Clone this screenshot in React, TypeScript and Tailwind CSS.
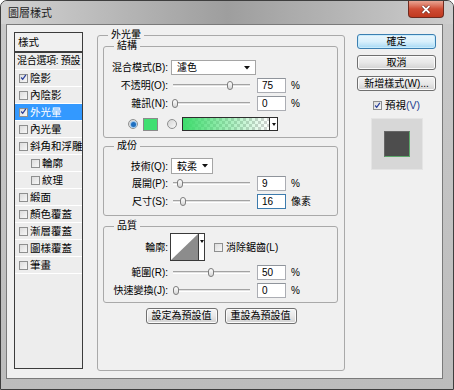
import React from "react";

function Check({ on = false }: { on?: boolean }) {
  return (
    <div className="w-[9px] h-[9px] shrink-0 border border-[#8e8f8f] bg-gradient-to-br from-[#dcdcdc] to-[#f7f7f7] flex items-center justify-center">
      {on && (
        <svg width="9" height="9" viewBox="0 0 9 9" className="-mt-[1px]">
          <path d="M1.5 4.5 L3.5 6.8 L7.5 1.2" fill="none" stroke="#253c9a" strokeWidth="1.6" />
        </svg>
      )}
    </div>
  );
}

function Radio({ on = false }: { on?: boolean }) {
  return (
    <div className="w-[10px] h-[10px] shrink-0 rounded-full border border-[#8e8f8f] bg-gradient-to-br from-[#d4d4d4] to-[#f8f8f8] flex items-center justify-center">
      {on && <div className="w-[5px] h-[5px] rounded-full bg-[#1f6fc0] ring-1 ring-[#9cc6ec]" />}
    </div>
  );
}

function Arrow() {
  return (
    <svg width="6" height="4" viewBox="0 0 6 4">
      <path d="M0 0 H6 L3 3.5 Z" fill="#111" />
    </svg>
  );
}

function Slider({ pos }: { pos: number }) {
  return (
    <div className="relative w-[77px] h-[11px] ml-[5px] flex items-center">
      <div className="w-full h-[3px] border-t border-[#a3a3a3] border-b border-b-white bg-[#e2e2e2]" />
      <div
        className="absolute top-[1px] w-[6px] h-[9px] rounded-[3px] border border-[#7d7d7d] bg-gradient-to-b from-white to-[#d6d6d6]"
        style={{ left: pos }}
      />
    </div>
  );
}

function Field({ value, focus = false }: { value: string; focus?: boolean }) {
  return (
    <div
      className={
        focus
          ? "w-[29px] h-[15px] ml-[7px] border border-[#3d7bad] bg-white pl-[4px] text-[10px] leading-[13px]"
          : "w-[29px] h-[15px] ml-[7px] border border-[#abadb3] border-t-[#8f949b] bg-white pl-[4px] text-[10px] leading-[13px]"
      }
    >
      {value}
    </div>
  );
}

function Label({ text }: { text: string }) {
  return <div className="w-[64px] shrink-0 text-right text-[10px] leading-[13px] whitespace-nowrap">{text}</div>;
}

function SliderRow({ label, pos, value, unit, focus, className }: { label: string; pos: number; value: string; unit: string; focus?: boolean; className: string }) {
  return (
    <div className={"flex items-center h-[15px] " + className}>
      <Label text={label} />
      <Slider pos={pos} />
      <Field value={value} focus={focus} />
      <div className="ml-[5px] text-[10px] leading-[13px]">{unit}</div>
    </div>
  );
}

function Group({ title, className, children }: { title: string; className: string; children: React.ReactNode }) {
  return (
    <div className={"relative border border-[#a9a9a9] rounded-[3px] " + className}>
      <div className="absolute -top-[8px] left-[10px] px-[3px] bg-[#f0f0f0] text-[10px] leading-[14px]">{title}</div>
      {children}
    </div>
  );
}

function WinButton({ text, primary = false, className = "" }: { text: string; primary?: boolean; className?: string }) {
  return (
    <div
      className={
        (primary
          ? "border-[#3c7fb1] bg-gradient-to-b from-[#eaf6fd] via-[#d9f0fc] to-[#a7d9f5] shadow-[inset_0_0_0_1px_#c8ecfd] "
          : "border-[#707070] bg-gradient-to-b from-[#f4f4f4] via-[#e8e8e8] to-[#d2d2d2] shadow-[inset_0_0_0_1px_#fbfbfb] ") +
        "h-[15px] border rounded-[3px] flex items-center justify-center text-[10px] leading-none " +
        className
      }
    >
      {text}
    </div>
  );
}

const items: { name: string; checked?: boolean; indent?: boolean; selected?: boolean }[] = [
  { name: "陰影", checked: true },
  { name: "內陰影" },
  { name: "外光暈", checked: true, selected: true },
  { name: "內光暈" },
  { name: "斜角和浮雕" },
  { name: "輪廓", indent: true },
  { name: "紋理", indent: true },
  { name: "緞面" },
  { name: "顏色覆蓋" },
  { name: "漸層覆蓋" },
  { name: "圖樣覆蓋" },
  { name: "筆畫" },
];

export default function App() {
  return (
    <div className="w-[454px] h-[390px] bg-white text-black font-['Liberation_Sans','Noto_Sans_CJK_TC',sans-serif]">
      <div className="w-[454px] h-[390px] rounded-t-[7px] border border-[#3e3e3e] bg-gradient-to-b from-[#c9c9c9] to-[#bcbcbc] flex flex-col">
        {/* title bar */}
        <div className="h-[23px] flex items-start rounded-t-[6px] bg-gradient-to-r from-[#d2d2d2] via-[#9e9e9e] to-[#cdcdcd]">
          <div className="pl-[7px] pt-[5px] text-[11px] leading-[14px] text-[#1b1b1b]">圖層樣式</div>
          <div className="ml-auto mr-[9px] w-[36px] h-[17px] rounded-b-[4px] border border-t-0 border-[#6e2a1f] bg-gradient-to-b from-[#e8a493] via-[#cf4c34] to-[#c0391f] flex items-center justify-center">
            <svg width="10" height="9" viewBox="0 0 10 9">
              <path d="M1.5 1 L8.5 8 M8.5 1 L1.5 8" stroke="#5a1a10" strokeWidth="3" />
              <path d="M1.5 1 L8.5 8 M8.5 1 L1.5 8" stroke="#fff" strokeWidth="1.8" />
            </svg>
          </div>
        </div>

        {/* client area */}
        <div className="ml-[5px] w-[437px] h-[355px] border border-[#7a7a7a] bg-[#f0f0f0] flex items-start">
          {/* styles list */}
          <div className="ml-[7px] mt-[7px] w-[69px] h-[337px] border border-[#3c3c3c] bg-[#ededed] overflow-hidden text-[10.5px] leading-[14px]">
            <div className="h-[20px] border-b-2 border-[#3c3c3c] bg-[#f0f0f0] pl-[3px] flex items-center">樣式</div>
            <div className="h-[17px] border-b border-white pl-[2px] flex items-center whitespace-nowrap text-[10px] tracking-[-0.3px]">混合選項: 預設</div>
            {items.map((it) => (
              <div
                key={it.name}
                className={
                  (it.selected ? "bg-[#3399ff] text-white " : "") +
                  (it.indent ? "pl-[16px] " : "pl-[4px] ") +
                  "h-[17px] border-b border-white flex items-center gap-[2px] whitespace-nowrap"
                }
              >
                <Check on={it.checked} />
                <span>{it.name}</span>
              </div>
            ))}
          </div>

          {/* main settings */}
          <div className="ml-[14px] mt-[10px] w-[248px] flex flex-col">
            <Group title="外光暈" className="h-[336px] pt-[10px] pl-[5px]">
              <Group title="結構" className="w-[235px] h-[92px]">
                <div className="flex items-center h-[15px] mt-[13px]">
                  <Label text="混合模式(B):" />
                  <div className="ml-[3px] w-[85px] h-[15px] border border-[#a5a5a5] bg-white flex items-center pl-[5px] pr-[5px] text-[10px]">
                    <span>濾色</span>
                    <span className="ml-auto">
                      <Arrow />
                    </span>
                  </div>
                </div>
                <SliderRow label="不透明(O):" pos={54} value="75" unit="%" className="mt-[3px]" />
                <SliderRow label="雜訊(N):" pos={-1} value="0" unit="%" className="mt-[3px]" />
                <div className="flex items-center h-[14px] mt-[6px] pl-[24px]">
                  <Radio on />
                  <div className="ml-[5px] w-[15px] h-[13px] border border-[#8a8a8a] bg-[#40df72]" />
                  <div className="ml-[9px]">
                    <Radio />
                  </div>
                  <div className="ml-[5px] h-[14px] flex border border-[#2e2e2e]">
                    <svg width="86" height="12" viewBox="0 0 86 12">
                      <defs>
                        <pattern id="chk" width="6" height="6" patternUnits="userSpaceOnUse">
                          <rect width="6" height="6" fill="#ffffff" />
                          <rect width="3" height="3" fill="#d2d2d2" />
                          <rect x="3" y="3" width="3" height="3" fill="#d2d2d2" />
                        </pattern>
                        <linearGradient id="glow" x1="0" x2="1" y1="0" y2="0">
                          <stop offset="0" stopColor="#3ddc6c" stopOpacity="1" />
                          <stop offset="1" stopColor="#3ddc6c" stopOpacity="0" />
                        </linearGradient>
                      </defs>
                      <rect width="86" height="12" fill="url(#chk)" />
                      <rect width="86" height="12" fill="url(#glow)" />
                    </svg>
                    <div className="w-[8px] border-l border-[#2e2e2e] bg-white flex items-center justify-center">
                      <svg width="4" height="3" viewBox="0 0 4 3">
                        <path d="M0 0 H4 L2 3 Z" fill="#111" />
                      </svg>
                    </div>
                  </div>
                </div>
              </Group>

              <Group title="成份" className="w-[235px] h-[70px] mt-[8px]">
                <div className="flex items-center h-[16px] mt-[11px]">
                  <Label text="技術(Q):" />
                  <div className="ml-[3px] w-[42px] h-[16px] border border-[#a5a5a5] bg-white flex items-center pl-[5px] pr-[4px] text-[10px]">
                    <span>較柔</span>
                    <span className="ml-auto">
                      <Arrow />
                    </span>
                  </div>
                </div>
                <SliderRow label="展開(P):" pos={4} value="9" unit="%" className="mt-[2px]" />
                <SliderRow label="尺寸(S):" pos={7} value="16" unit="像素" focus className="mt-[3px]" />
              </Group>

              <Group title="品質" className="w-[235px] h-[77px] mt-[10px]">
                <div className="flex items-center h-[28px] mt-[6px]">
                  <Label text="輪廓:" />
                  <div className="ml-[2px] flex border border-[#3a3a3a] bg-white">
                    <svg width="27" height="26" viewBox="0 0 27 26" className="block">
                      <rect width="27" height="26" fill="#ffffff" />
                      <polygon points="0,26 27,0 27,26" fill="#8c8c8c" />
                    </svg>
                    <div className="w-[6px] border-l border-[#3a3a3a] bg-white flex items-start justify-center pt-[6px]">
                      <svg width="4" height="3" viewBox="0 0 4 3">
                        <path d="M0 0 H4 L2 3 Z" fill="#111" />
                      </svg>
                    </div>
                  </div>
                  <div className="ml-[9px] flex items-center gap-[3px] text-[10px]">
                    <Check />
                    <span>消除鋸齒(L)</span>
                  </div>
                </div>
                <SliderRow label="範圍(R):" pos={35} value="50" unit="%" className="mt-[4px]" />
                <SliderRow label="快速變換(J):" pos={0} value="0" unit="%" className="mt-[3px]" />
              </Group>

              <div className="mt-[5px] pr-[5px] flex justify-center gap-[7px]">
                <WinButton text="設定為預設值" className="w-[72px] h-[16px]" />
                <WinButton text="重設為預設值" className="w-[72px] h-[16px]" />
              </div>
            </Group>
          </div>

          {/* right column */}
          <div className="ml-[12px] mt-[9px] w-[79px] flex flex-col">
            <WinButton text="確定" primary />
            <WinButton text="取消" className="mt-[6px]" />
            <WinButton text="新增樣式(W)..." className="mt-[6px]" />
            <div className="mt-[8px] flex items-center justify-center gap-[3px] text-[10.5px] leading-[13px]">
              <Check on />
              <span>
                預視<span className="text-[#1f3f8f]">(V)</span>
              </span>
            </div>
            <div className="mt-[6px] self-center w-[52px] h-[52px] bg-[#d7d7d7] border border-[#e4e4e4] flex items-center justify-center">
              <div className="w-[26px] h-[26px] bg-[#4d4d4d] border border-[#666] border-r-[#5da86b] border-b-[#5da86b]" />
            </div>
          </div>
        </div>
      </div>
    </div>
  );
}
